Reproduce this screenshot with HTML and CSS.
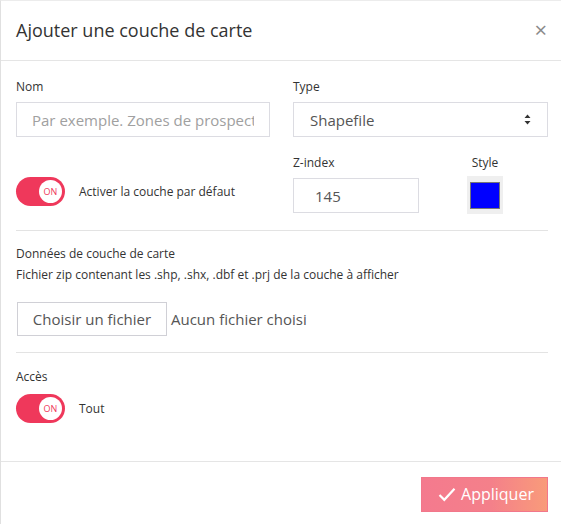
FILE: index.html
```html
<!DOCTYPE html>
<html lang="fr">
<head>
    <meta charset="UTF-8">
    <meta name="viewport" content="width=device-width, initial-scale=1.0">
    <title>Ajouter une couche de carte</title>
    <link rel="stylesheet" href="styles.css">
</head>
<body>
    <div class="modal">
        <div class="modal-header">
            <h4 class="modal-title">Ajouter une couche de carte</h4>
            <button class="close" type="button">&times;</button>
        </div>

        <div class="modal-body">
            <div class="row-two">
                <div class="field">
                    <label>Nom</label>
                    <input class="form-control" type="text" placeholder="Par exemple. Zones de prospection">
                </div>
                <div class="field">
                    <label>Type</label>
                    <div class="select">
                        <span>Shapefile</span>
                        <svg width="7" height="11" viewBox="0 0 7 11"><path d="M3.5 0.5 L6.5 4 L0.5 4 Z M3.5 10.5 L6.5 7 L0.5 7 Z" fill="#333"/></svg>
                    </div>
                </div>
            </div>

            <div class="row-two second">
                <div class="toggle-line top">
                    <div class="switch"><span class="knob">ON</span></div>
                    <span class="switch-label">Activer la couche par défaut</span>
                </div>
                <div class="sub-row">
                    <div class="field">
                        <label>Z-index</label>
                        <input class="form-control num" type="text" value="145">
                    </div>
                    <div class="field style-field">
                        <label>Style</label>
                        <div class="swatch"><div class="swatch-color"></div></div>
                    </div>
                </div>
            </div>

            <hr>

            <div class="data-block">
                <p class="data-title">Données de couche de carte</p>
                <p class="data-help">Fichier zip contenant les .shp, .shx, .dbf et .prj de la couche à afficher</p>
                <div class="file-line">
                    <button class="file-btn" type="button">Choisir un fichier</button>
                    <span class="file-name">Aucun fichier choisi</span>
                </div>
            </div>

            <hr>

            <div class="access">
                <label>Accès</label>
                <div class="toggle-line">
                    <div class="switch"><span class="knob">ON</span></div>
                    <span class="switch-label">Tout</span>
                </div>
            </div>
        </div>

        <div class="modal-footer">
            <button class="btn-apply" type="button">
                <svg width="18" height="15" viewBox="0 0 18 15"><path d="M1.5 8 L6.3 12.8 L16.5 1.8" fill="none" stroke="#fff" stroke-width="2.2"/></svg>
                Appliquer
            </button>
        </div>
    </div>
</body>
</html>
```

FILE: styles.css
```css
body
{
    margin: 0;
    font-family: "Open Sans", "Liberation Sans", sans-serif;
    color: #333;
    background-color: #fff;
}
.modal
{
    border-left: 1px solid #e0e0e0;
    border-top: 1px solid #ececec;
    min-height: 524px;
    box-sizing: border-box;
}
.modal-header
{
    height: 59px;
    border-bottom: 1px solid #e5e5e5;
    display: flex;
    align-items: center;
    justify-content: space-between;
    padding: 0 12px 0 15px;
}
.modal-title
{
    margin: 0;
    font-size: 18px;
    font-weight: 400;
    color: #333;
    padding-bottom: 1px;
}
.close
{
    border: none;
    background: none;
    font-family: "Open Sans", sans-serif;
    font-size: 22px;
    line-height: 1;
    color: #8a8a8a;
    padding: 0 2px 4px;
    cursor: pointer;
}
.modal-body
{
    padding: 17px 13px 38px 15px;
}
label
{
    display: block;
    font-size: 12px;
    font-weight: 500;
    line-height: 18px;
    color: #333;
    margin-bottom: 6px;
}
.row-two
{
    display: grid;
    grid-template-columns: 254px 255px;
    column-gap: 23px;
}
.row-two.second
{
    margin-top: 17px;
}
.form-control
{
    display: block;
    width: 100%;
    height: 35px;
    box-sizing: border-box;
    border: 1px solid #dcdce2;
    padding: 0 15px;
    font-family: "Open Sans", sans-serif;
    font-size: 15px;
    color: #555;
    outline: none;
}
.form-control::placeholder
{
    color: #a0a0a0;
}
.form-control.num
{
    padding-left: 21px;
}
.select
{
    height: 35px;
    box-sizing: border-box;
    border: 1px solid #dcdce2;
    display: flex;
    align-items: center;
    justify-content: space-between;
    padding: 0 16px 0 16px;
    font-size: 15px;
    color: #555;
}
.toggle-line
{
    display: flex;
    align-items: center;
}
.toggle-line.top
{
    margin-top: 23px;
    align-self: start;
}
.switch
{
    width: 49px;
    height: 29px;
    border-radius: 15px;
    background-color: #ef385b;
    position: relative;
    flex-shrink: 0;
}
.knob
{
    position: absolute;
    right: 3px;
    top: 3px;
    width: 23px;
    height: 23px;
    border-radius: 50%;
    background-color: #fff;
    color: #ef385b;
    font-size: 9px;
    font-weight: 500;
    line-height: 23px;
    text-align: center;
}
.switch-label
{
    margin-left: 14px;
    font-size: 12px;
    font-weight: 500;
    color: #333;
}
.sub-row
{
    display: grid;
    grid-template-columns: 126px 36px;
    column-gap: 48px;
}
.style-field
{
    display: flex;
    flex-direction: column;
    align-items: center;
}
.style-field label
{
    margin-bottom: 4px;
}
.swatch
{
    background-color: #efefef;
    padding: 6px 3px 5px 3px;
}
.swatch-color
{
    width: 28px;
    height: 25px;
    border: 1px solid #777;
    background-color: #0000ff;
}
hr
{
    border: none;
    border-top: 1px solid #e3e3e3;
    margin: 16px 0 0 0;
}
.data-block
{
    padding-top: 13px;
}
.data-title
{
    margin: 0;
    font-size: 12px;
    line-height: 20px;
    color: #333;
}
.data-help
{
    margin: 3px 0 0 0;
    font-size: 12px;
    line-height: 16px;
    color: #333;
}
.file-line
{
    display: flex;
    align-items: center;
    margin-top: 19px;
}
.file-btn
{
    height: 34px;
    width: 150px;
    margin-left: 1px;
    border: 1px solid #d0d0d6;
    background-color: #fff;
    font-family: "Open Sans", sans-serif;
    font-size: 15px;
    color: #555;
    padding: 0;
}
.file-name
{
    margin-left: 4px;
    font-size: 15px;
    color: #555;
}
.access
{
    padding-top: 15px;
}
.access label
{
    margin-bottom: 8px;
}
.modal-footer
{
    border-top: 1px solid #e5e5e5;
    display: flex;
    justify-content: flex-end;
    padding: 15px 13px 0 0;
}
.btn-apply
{
    width: 127px;
    height: 35px;
    border: 1px solid #f2778b;
    background: linear-gradient(to right, #f47a8e 0%, #f4808a 55%, #f99b7a 100%);
    color: #fff;
    font-family: "Open Sans", sans-serif;
    font-size: 16px;
    display: flex;
    align-items: center;
    justify-content: center;
    gap: 5px;
    padding: 0 0 1px 3px;
}
```
